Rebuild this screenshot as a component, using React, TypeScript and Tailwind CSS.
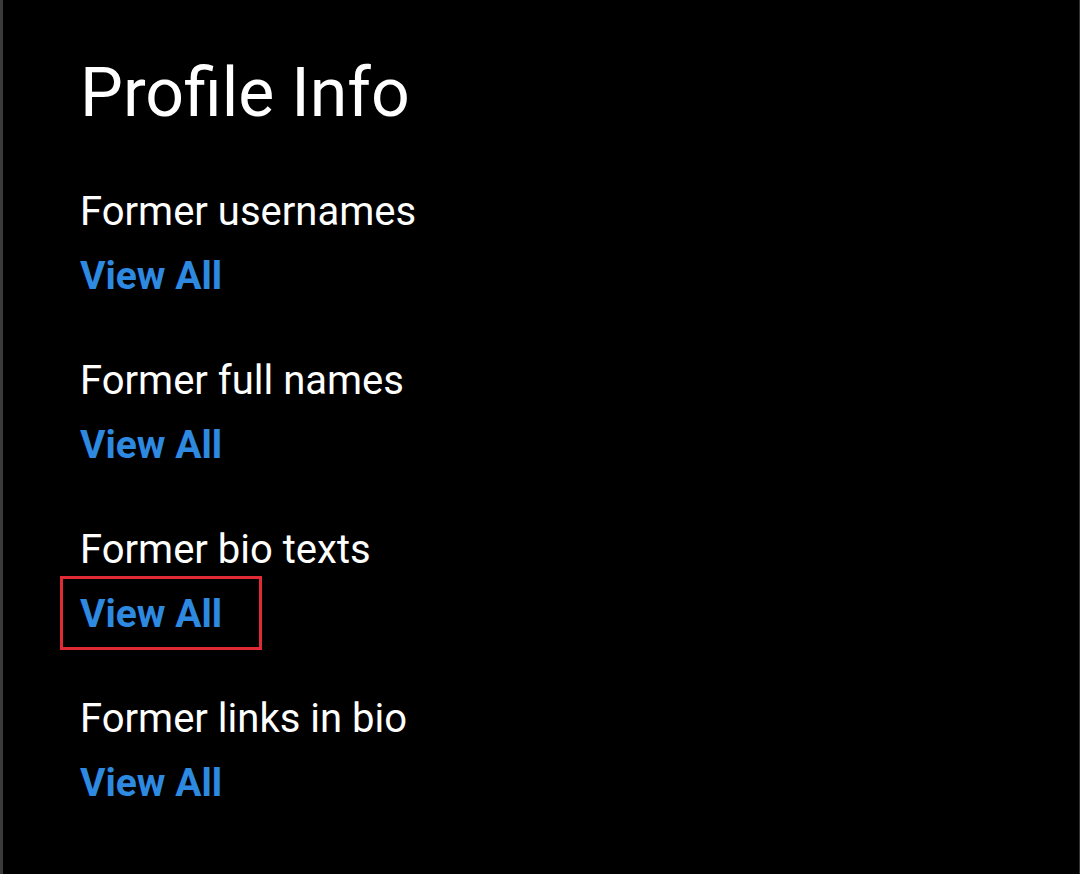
import React from "react";

// ─── Section ──────────────────────────────────────────────────────────────────
// Label on one line, blue "View All" link under it.

const Section = ({ label, boxed = false }: { label: string; boxed?: boolean }) => (
  <div className="flex flex-col gap-[16px]">
    <p className="text-[40px] leading-[48px] text-white">{label}</p>
    <div className="relative">
      <a className="text-[39px] leading-[48px] font-bold text-[#2d8ae0]">View All</a>
      {boxed && (
        <span className="absolute left-[-20px] top-[-14px] w-[202px] h-[74px] border-[3px] border-[#e02a35]" />
      )}
    </div>
  </div>
);

export default function App() {
  const sections = [
    "Former usernames",
    "Former full names",
    "Former bio texts",
    "Former links in bio",
  ];

  return (
    <div
      className="w-[1080px] h-[874px] bg-black border-l-[3px] border-l-[#3a3a3a] border-r border-r-[#333] pl-[77px] pt-[53px]"
      style={{ fontFamily: "Roboto, 'Noto Sans', sans-serif" }}
    >
      <h1 className="text-[68px] leading-[80px] text-white">Profile Info</h1>
      <div className="mt-[55px] flex flex-col gap-[57px]">
        {sections.map((s) => (
          <Section key={s} label={s} boxed={s === "Former bio texts"} />
        ))}
      </div>
    </div>
  );
}
